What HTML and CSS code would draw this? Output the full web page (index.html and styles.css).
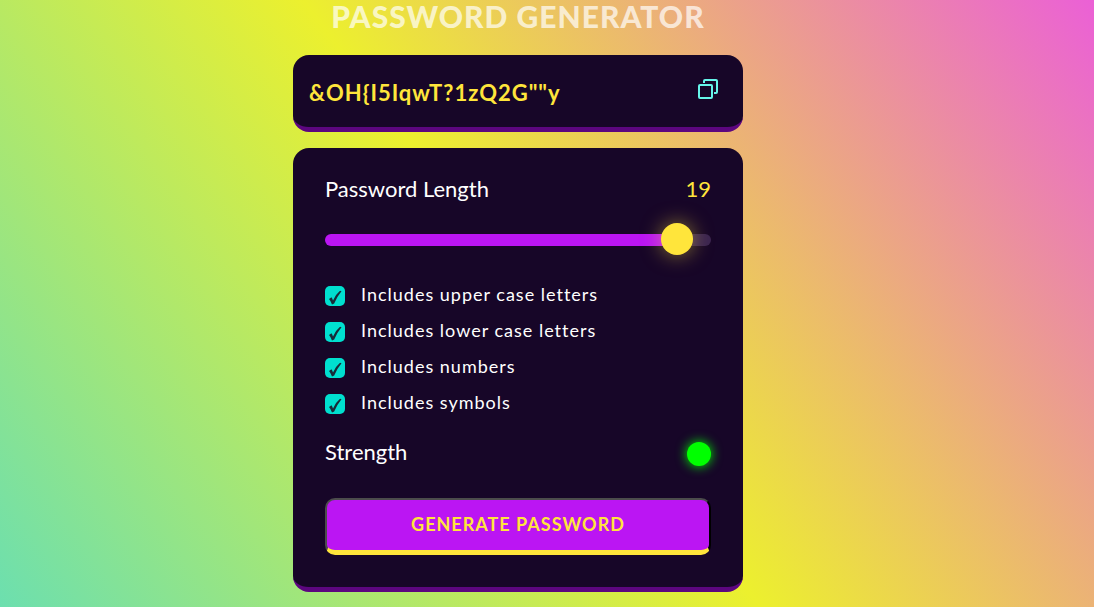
FILE: index.html
```html
<!DOCTYPE html>
<html lang="en">
<head>
<meta charset="utf-8">
<meta name="viewport" content="width=device-width, initial-scale=1">
<title>Password Generator</title>
<link rel="stylesheet" href="styles.css">
</head>
<body>
<main class="container">
  <h1 class="title">PASSWORD GENERATOR</h1>
  <section class="display">
    <input class="password" type="text" readonly aria-label="Generated password" value="&amp;OH{I5IqwT?1zQ2G&quot;&quot;y">
    <button class="copy" type="button" aria-label="Copy password">
      <svg viewBox="0 0 20 20" width="20" height="20" fill="none" stroke="currentColor" stroke-width="2" stroke-linejoin="round">
        <rect x="1" y="6" width="13" height="13" rx="1"/>
        <path d="M6 4V2a1 1 0 0 1 1-1h11a1 1 0 0 1 1 1v11a1 1 0 0 1-1 1h-2"/>
      </svg>
    </button>
  </section>
  <form class="panel">
    <div class="row">
      <label for="length">Password Length</label>
      <output class="count" for="length">19</output>
    </div>
    <input class="slider" id="length" type="range" min="0" max="20" value="19">
    <div class="options">
      <label class="option"><input class="check" type="checkbox" checked>Includes upper case letters</label>
      <label class="option"><input class="check" type="checkbox" checked>Includes lower case letters</label>
      <label class="option"><input class="check" type="checkbox" checked>Includes numbers</label>
      <label class="option"><input class="check" type="checkbox" checked>Includes symbols</label>
    </div>
    <div class="row">
      <span>Strength</span>
      <span class="indicator"></span>
    </div>
    <button class="generate" type="button">GENERATE PASSWORD</button>
  </form>
</main>
</body>
</html>
```
FILE: styles.css
```css
:root {
  --dark: #170628;
  --violet: #bb15f3;
  --plum: #5c067f;
  --yellow: #ffe53b;
  --cyan: #66f5ea;
  --teal: #00dfcf;
}

* {
  box-sizing: border-box;
  margin: 0;
}

body {
  min-height: 100vh;
  padding-right: 58px;
  display: flex;
  justify-content: center;
  background: linear-gradient(53deg, #6cdfaf, #ecf02e 49%, #eb60d6);
  font-family: Lato, "Liberation Sans", sans-serif;
  color: #fff;
}

.container {
  width: 100%;
  max-width: 450px;
  padding-bottom: 15px;
}

.title {
  margin-bottom: 23px;
  font-size: 30px;
  font-weight: 900;
  line-height: 32px;
  letter-spacing: 1px;
  text-align: center;
  white-space: nowrap;
  color: rgba(255, 255, 255, 0.7);
}

.display {
  display: flex;
  align-items: center;
  padding: 16px 24px 16px 16px;
  border-bottom: 5px solid var(--plum);
  border-radius: 16px;
  background: var(--dark);
}

.password {
  flex: 1;
  min-width: 0;
  height: 40px;
  padding: 2px 0 0;
  border: 0;
  outline: 0;
  background: transparent;
  font: bold 22px Lato, "Liberation Sans", sans-serif;
  letter-spacing: 1px;
  color: var(--yellow);
}

.copy {
  display: flex;
  padding: 0 1px 4px;
  border: 0;
  background: none;
  color: var(--cyan);
  cursor: pointer;
}

.panel {
  margin-top: 16px;
  padding: 25px 32px 32px;
  border-bottom: 5px solid var(--plum);
  border-radius: 16px;
  background: var(--dark);
}

.row {
  display: flex;
  align-items: center;
  justify-content: space-between;
  font-size: 22px;
  line-height: 32px;
}

.count {
  color: var(--yellow);
}

.slider {
  appearance: none;
  display: block;
  width: 100%;
  height: 32px;
  margin: 19px 0 26px;
  background: transparent;
  cursor: pointer;
}

.slider::-webkit-slider-runnable-track {
  height: 12px;
  border-radius: 6px;
  background: linear-gradient(to right, var(--violet) 92%, #3a2350 92%);
}

.slider::-webkit-slider-thumb {
  appearance: none;
  width: 32px;
  height: 32px;
  margin-top: -11px;
  border-radius: 50%;
  background: var(--yellow);
  box-shadow: 0 0 20px rgba(255, 229, 59, 0.5);
}

.options {
  display: grid;
  gap: 12px;
  margin-bottom: 22px;
}

.option {
  display: flex;
  align-items: center;
  gap: 16px;
  font-size: 18px;
  line-height: 24px;
  letter-spacing: 1px;
}

.check {
  appearance: none;
  width: 20px;
  height: 20px;
  margin-top: 4px;
  border-radius: 5px;
  background: var(--teal);
}

.check:checked::before {
  content: "";
  display: block;
  width: 20px;
  height: 20px;
  background: #172b38;
  clip-path: path("M4 13L6.5 11.2Q7.4 12.5 8 14.6Q10.5 8.5 15 4.8L16.5 5.2Q12 10.5 9.2 17.6L7 18.5Q5.8 15 4 13Z");
}

.indicator {
  width: 24px;
  height: 24px;
  margin-top: 4px;
  border-radius: 50%;
  background: #0f0;
  box-shadow: 0 0 12px #0f0;
}

.generate {
  display: block;
  width: 100%;
  margin-top: 30px;
  padding: 11px 12px 13px;
  border: 2px solid;
  border-color: #4c4c4c #000 var(--yellow) #4c4c4c;
  border-bottom-width: 5px;
  border-radius: 10px;
  background: var(--violet);
  font: bold 18px/26px Lato, "Liberation Sans", sans-serif;
  letter-spacing: 1px;
  color: var(--yellow);
  cursor: pointer;
}
```
